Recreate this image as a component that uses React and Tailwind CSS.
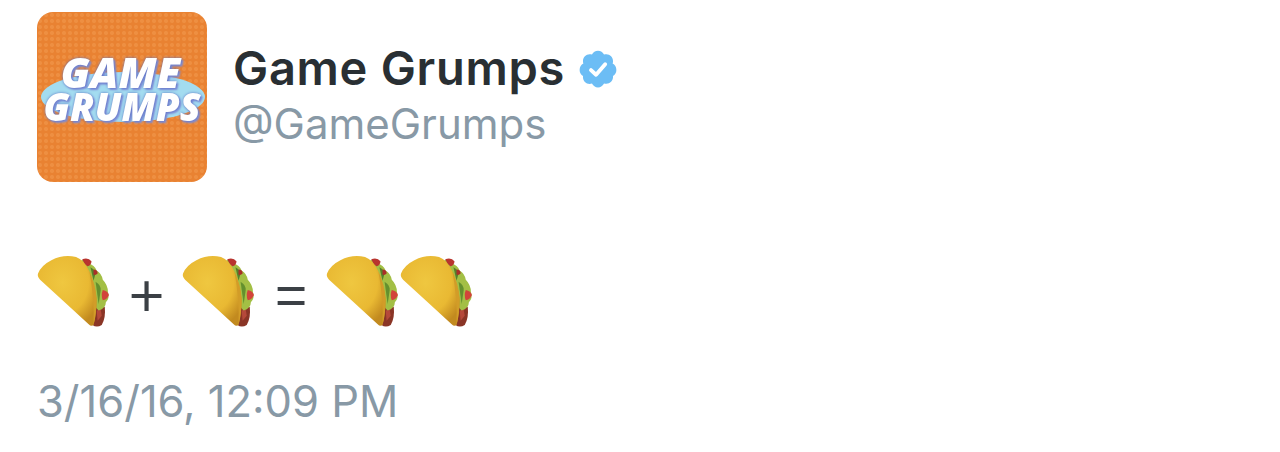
import React from "react";

function Taco() {
    return (
        <svg width="74" height="74" viewBox="0 0 72 72" className="shrink-0">
            <defs>
                <radialGradient id="shell" cx="42%" cy="38%" r="68%">
                    <stop offset="0%" stopColor="#efc740" />
                    <stop offset="65%" stopColor="#e9b933" />
                    <stop offset="100%" stopColor="#c28a1f" />
                </radialGradient>
            </defs>
            {/* meat */}
            <path d="M54 50 Q62 46 66 52 Q67 62 63 69 Q58 72 54 69 Z" fill="#8a3526" />
            <path d="M58 55 L62 54 L63 60 L59 65 Z" fill="#b5493a" />
            {/* lettuce */}
            <path d="M43 6 Q48 5 50 9 Q56 11 58 16 Q63 19 64 25 Q69 30 69 37 Q71 43 67 47 Q67 53 60 55 Q55 52 50 30 Z" fill="#a3bf45" />
            <path d="M52 13 Q56 15 57 19 L55 26 Z" fill="#55802c" />
            <path d="M57 27 Q62 30 62 35 L60 49 Z" fill="#64902e" />
            {/* tomato */}
            <path d="M44 5 Q50 3 53 7 Q53 11 49 12 Q46 10 44 5 Z" fill="#b8342e" />
            <path d="M55 15 Q59 15 59 19 Q57 21 55 20 Z" fill="#a92f28" />
            <path d="M64 35 Q69 36 70 40 Q68 45 64 45 Q62 40 64 35 Z" fill="#d2443a" />
            {/* shell */}
            <path d="M1 19 Q4 11 14 6 Q26 0 38 3 Q46 6 51 17 Q57 30 58 44 Q58 58 55 69 Q53 71 50 68 Q26 46 3 25 Q0 22 1 19 Z" fill="url(#shell)" />
            <path d="M51 17 Q57 30 58 44 Q58 58 55 69 Q56 44 51 17 Z" fill="#d29c28" />
        </svg>
    );
}

export default function App() {
    return (
        <div className="w-[1280px] h-[452px] bg-white overflow-hidden pt-3 pl-[37px] font-['Inter',sans-serif]">
            <div className="flex items-start">
                <div className="w-[170px] h-[170px] rounded-[16px] bg-[#e98232] shrink-0 relative overflow-hidden bg-[radial-gradient(#ee8f42_1.5px,transparent_2.5px)] bg-[length:6px_6px]">
                    <div className="absolute left-[4px] top-[60px] w-[164px] h-[50px] rounded-[50%] bg-[#a3dcf0]" />
                    <div className="absolute inset-x-0 top-[42px] flex flex-col items-center font-['Open_Sans',sans-serif] italic font-extrabold text-white blur-[0.5px] [text-shadow:0_0_3px_#5b6fc0,2px_2px_2px_#7f8fd8]">
                        <span className="text-[42px] leading-[36px] mr-[3px]">GAME</span>
                        <span className="text-[38px] leading-[32px]">GRUMPS</span>
                    </div>
                </div>
                <div className="ml-[26px] mt-[26px] flex flex-col">
                    <div className="flex items-center">
                        <span className="text-[47px] leading-[60px] tracking-[0.7px] font-semibold text-[#292f33]">Game Grumps</span>
                        <svg width="42" height="42" viewBox="0 0 24 24" className="ml-[12px] mt-[2px]">
                            <path fill="#6cbdf5" d="M22.5 12.5c0-1.58-.875-2.95-2.148-3.6.154-.435.238-.905.238-1.4 0-2.21-1.71-3.998-3.818-3.998-.47 0-.92.084-1.336.25C14.818 2.415 13.51 1.5 12 1.5s-2.816.917-3.437 2.25c-.415-.165-.866-.25-1.336-.25-2.11 0-3.818 1.79-3.818 4 0 .494.083.964.237 1.4-1.272.65-2.147 2.018-2.147 3.6 0 1.495.782 2.798 1.942 3.486-.02.17-.032.34-.032.514 0 2.21 1.708 4 3.818 4 .47 0 .92-.086 1.335-.25.62 1.334 1.926 2.25 3.437 2.25 1.512 0 2.818-.916 3.437-2.25.415.163.865.248 1.336.248 2.11 0 3.818-1.79 3.818-4 0-.174-.012-.344-.033-.513 1.158-.687 1.943-1.99 1.943-3.484z" />
                            <path fill="none" stroke="#ffffff" strokeWidth="2.2" strokeLinecap="round" strokeLinejoin="round" d="M8 12.6l2.9 2.7 5.2-6" />
                        </svg>
                    </div>
                    <span className="text-[42px] leading-[50px] mt-[1px] text-[#8899a6]">@GameGrumps</span>
                </div>
            </div>
            <div className="flex items-center mt-[72px] h-[74px] text-[#3b4045] text-[66px] leading-none font-light">
                <Taco />
                <span className="w-[71px] text-center">+</span>
                <Taco />
                <span className="w-[70px] text-center">=</span>
                <Taco />
                <Taco />
            </div>
            <div className="mt-[48px] text-[43.5px] leading-[50px] text-[#8899a6]">3/16/16, 12:09 PM</div>
        </div>
    );
}
